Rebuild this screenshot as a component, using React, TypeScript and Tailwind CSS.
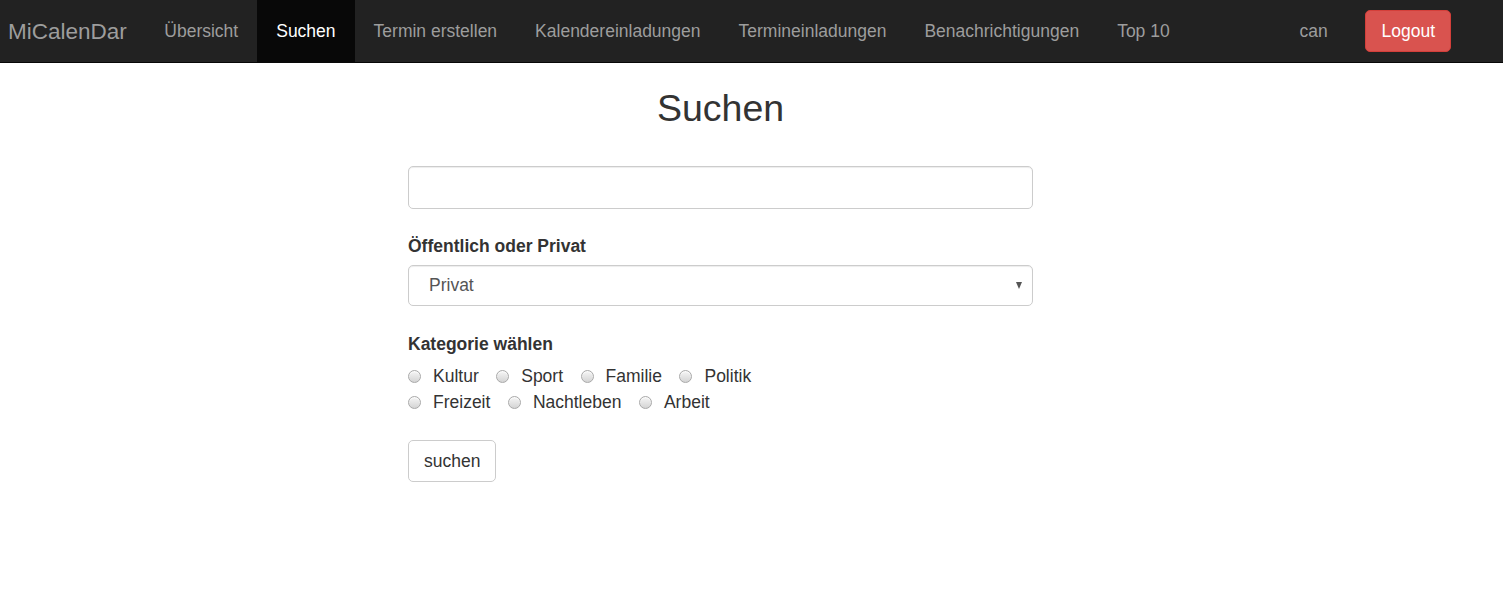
import { useState } from "react";

const navLinks = [
  "Übersicht",
  "Suchen",
  "Termin erstellen",
  "Kalendereinladungen",
  "Termineinladungen",
  "Benachrichtigungen",
  "Top 10",
];

const categoryRows = [
  ["Kultur", "Sport", "Familie", "Politik"],
  ["Freizeit", "Nachtleben", "Arbeit"],
];

function Radio({ label }: { label: string }) {
  return (
    <label className="flex items-center h-[26px] cursor-pointer">
      <span className="w-[13px] h-[13px] rounded-full border border-[#a9a9a9] bg-linear-to-b from-[#f6f6f6] to-[#d4d4d4] shadow-[inset_0_1px_1px_rgba(255,255,255,0.8)]" />
      <span className="ml-[12px]">{label}</span>
    </label>
  );
}

export default function App() {
  const [query, setQuery] = useState("");

  return (
    <div
      className="min-h-[609px] bg-white text-[#333] text-[17.5px] leading-[25px]"
      style={{ fontFamily: '"Liberation Sans", Arial, sans-serif' }}
    >
      {/* navbar */}
      <nav className="h-[63px] bg-[#222] border-b border-[#080808] flex items-stretch">
        <div className="pl-2 pr-[18.5px] flex items-center text-[22.5px] text-[#9d9d9d]">
          MiCalenDar
        </div>
        <ul className="flex items-stretch">
          {navLinks.map((link) => (
            <li
              key={link}
              className={
                link === "Suchen"
                  ? "px-[19px] flex items-center bg-[#080808] text-white"
                  : "px-[19px] flex items-center text-[#9d9d9d]"
              }
            >
              {link}
            </li>
          ))}
        </ul>
        <div className="ml-auto flex items-center mr-[52px]">
          <span className="px-[18.75px] text-[#9d9d9d]">can</span>
          <button className="ml-[19px] h-[42px] px-[15px] rounded-[5px] bg-[#d9534f] border border-[#d43f3a] text-white">
            Logout
          </button>
        </div>
      </nav>

      {/* content */}
      <div className="ml-[408px] w-[625px] pt-[25px]">
        <h1 className="text-center text-[37.5px] leading-[41px] text-[#333]">Suchen</h1>

        <input
          value={query}
          onChange={(e) => setQuery(e.target.value)}
          className="mt-[37px] block w-full h-[43px] px-[15px] rounded-[5px] border border-[#ccc] shadow-[inset_0_1px_1px_rgba(0,0,0,0.075)] outline-none"
        />

        <div className="mt-[25px] font-bold">Öffentlich oder Privat</div>
        <div className="relative mt-[6px]">
          <div className="h-[41px] flex items-center pl-[20px] rounded-[5px] border border-[#ccc] shadow-[inset_0_1px_1px_rgba(0,0,0,0.075)] text-[#555]">
            Privat
          </div>
          <span className="absolute right-[11px] top-[17px] w-0 h-0 border-l-[3.5px] border-r-[3.5px] border-t-[7px] border-l-transparent border-r-transparent border-t-[#555]" />
        </div>

        <div className="mt-[26px] font-bold">Kategorie wählen</div>
        <div className="mt-[6px]">
          {categoryRows.map((row, i) => (
            <div key={i} className="flex gap-x-[17.5px]">
              {row.map((c) => (
                <Radio key={c} label={c} />
              ))}
            </div>
          ))}
        </div>

        <button className="mt-[25px] h-[42px] px-[15px] rounded-[5px] border border-[#ccc] bg-white text-[#333]">
          suchen
        </button>
      </div>
    </div>
  );
}
